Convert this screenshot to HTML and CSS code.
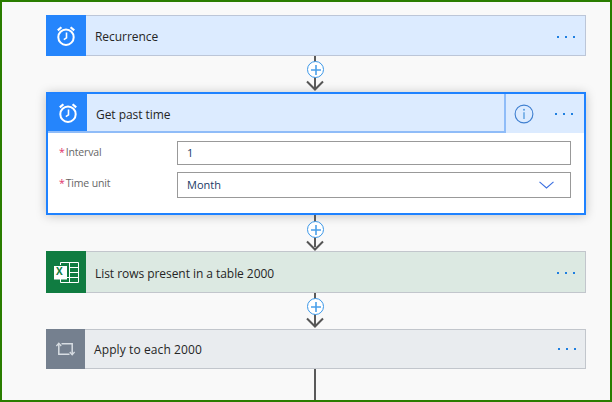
FILE: index.html
```html
<!DOCTYPE html>
<html lang="en">
<head>
<meta charset="utf-8">
<title>Flow</title>
<link rel="stylesheet" href="styles.css">
</head>
<body>
<div class="frame">
  <div class="flow">
    <div class="card card-blue">
      <div class="tile tile-blue">
        <svg class="ico" viewBox="0 0 18 20" width="18" height="20"><circle cx="9" cy="11.2" r="7.7" fill="none" stroke="#fff" stroke-width="2"/><path d="M9.5 6.6V11.8L6.8 13.6" fill="none" stroke="#fff" stroke-width="1.6"/><path d="M.8 4.4 4.4 1.2M17.2 4.4 13.6 1.2" stroke="#fff" stroke-width="2.2" fill="none"/></svg>
      </div>
      <div class="title">Recurrence</div>
      <div class="dots"><i></i><i></i><i></i></div>
    </div>

    <div class="link">
      <span class="line"></span>
      <span class="plus"><svg viewBox="0 0 10 10" width="10" height="10"><path d="M0 5H10M5 0V10" stroke="#4aa0ea" stroke-width="1.6"/></svg></span>
      <svg class="arrow" viewBox="0 0 18 11" width="18" height="11"><path d="M1 1.5 9 9.5 17 1.5" fill="none" stroke="#555" stroke-width="2"/></svg>
    </div>

    <div class="card-open">
      <div class="open-head">
        <div class="head-main">
          <div class="tile tile-blue tile-open">
            <svg class="ico" viewBox="0 0 18 20" width="18" height="20"><circle cx="9" cy="11.2" r="7.7" fill="none" stroke="#fff" stroke-width="2"/><path d="M9.5 6.6V11.8L6.8 13.6" fill="none" stroke="#fff" stroke-width="1.6"/><path d="M.8 4.4 4.4 1.2M17.2 4.4 13.6 1.2" stroke="#fff" stroke-width="2.2" fill="none"/></svg>
          </div>
          <div class="title title-open">Get past time</div>
        </div>
        <div class="head-side">
          <svg class="info" viewBox="0 0 20 20" width="20" height="20"><circle cx="10" cy="10" r="8.9" fill="none" stroke="#3f7fd0" stroke-width="1.1"/><circle cx="10" cy="5.8" r="1" fill="#5a9fe0"/><path d="M10 8.2V15" stroke="#5a9fe0" stroke-width="1.4"/></svg>
          <div class="dots dots-open"><i></i><i></i><i></i></div>
        </div>
      </div>
      <div class="fields">
        <div class="field">
          <label class="label label-first"><span class="req">*</span>Interval</label>
          <div class="input input-short">1</div>
        </div>
        <div class="field">
          <label class="label"><span class="req">*</span>Time unit</label>
          <div class="input input-select">Month
            <svg class="chev" viewBox="0 0 15 8" width="15" height="8"><path d="M.5 .8 7.5 7 14.5 .8" fill="none" stroke="#3b6fe0" stroke-width="1.1"/></svg>
          </div>
        </div>
      </div>
    </div>

    <div class="link link-after-open">
      <span class="line"></span>
      <span class="plus"><svg viewBox="0 0 10 10" width="10" height="10"><path d="M0 5H10M5 0V10" stroke="#4aa0ea" stroke-width="1.6"/></svg></span>
      <svg class="arrow" viewBox="0 0 18 11" width="18" height="11"><path d="M1 1.5 9 9.5 17 1.5" fill="none" stroke="#555" stroke-width="2"/></svg>
    </div>

    <div class="card card-green">
      <div class="tile tile-green">
        <svg class="xl" viewBox="0 0 25 21" width="25" height="21"><path d="M6.5 3V.5H24.5V20.5H6.5V17" fill="none" stroke="#fff" stroke-width="1"/><path d="M15.5 .5V20.5M15.5 5.5H24.5M15.5 10.5H24.5M15.5 15.5H24.5M6.5 15.5H15.5" stroke="#fff" stroke-width="1" fill="none"/><rect x="0" y="4" width="13" height="13.5" fill="#fff"/></svg>
        <span class="xl-x">X</span>
      </div>
      <div class="title">List rows present in a table 2000</div>
      <div class="dots"><i></i><i></i><i></i></div>
    </div>

    <div class="link">
      <span class="line"></span>
      <span class="plus"><svg viewBox="0 0 10 10" width="10" height="10"><path d="M0 5H10M5 0V10" stroke="#4aa0ea" stroke-width="1.6"/></svg></span>
      <svg class="arrow" viewBox="0 0 18 11" width="18" height="11"><path d="M1 1.5 9 9.5 17 1.5" fill="none" stroke="#555" stroke-width="2"/></svg>
    </div>

    <div class="card card-grey">
      <div class="tile tile-grey">
        <svg viewBox="0 0 19 14" width="19" height="14"><path d="M2.8 2V12.2H13.5" fill="none" stroke="#d8dde3" stroke-width="1.5"/><path d="M5.5 1.8H16.2V12.5" fill="none" stroke="#d8dde3" stroke-width="1.5"/><path d="M.4 4 2.8 1.2 5.2 4M13.8 10 16.2 12.8 18.6 10" fill="none" stroke="#d8dde3" stroke-width="1.3"/></svg>
      </div>
      <div class="title title-grey">Apply to each 2000</div>
      <div class="dots dots-grey"><i></i><i></i><i></i></div>
    </div>

    <div class="tail"></div>
  </div>
</div>
</body>
</html>
```

FILE: styles.css
```css
* { box-sizing: border-box; }
html, body { margin: 0; padding: 0; }
body { width: 612px; height: 402px; overflow: hidden; font-family: "Open Sans", "Noto Sans", sans-serif; color: #1a1a1a; }

.frame { width: 612px; height: 402px; border: 2px solid #2a7d00; background: #f9f9f9; overflow: hidden; padding: 13px 0 0 44px; }
.flow { width: 540px; display: flex; flex-direction: column; }

.card { display: flex; align-items: center; border: 1px solid #c2c6cc; border-left: 0; }
.card-blue { height: 41px; background: #dcebff; border-color: #bcc6d8; }
.card-green { height: 42px; background: #dce9e2; }
.card-grey { height: 40px; background: #e9ecef; }

.tile { display: flex; align-items: center; justify-content: center; flex: none; width: 40px; align-self: stretch; margin: -1px 0; position: relative; }
.tile-blue { background: #2585fc; }
.tile-green { background: #107c41; }
.tile-grey { background: #75808f; width: 39px; }
.tile-open { margin: 0; width: 39px; }

.title { font-size: 12px; letter-spacing: -.05px; color: #252525; margin-left: 9px; padding-top: 2px; flex: 1; }
.title-open { padding-top: 3px; }
.title-grey { padding-top: 0; letter-spacing: .1px; }

.dots { display: flex; gap: 6px; margin-right: 10px; padding-top: 2px; }
.dots i { width: 2px; height: 2px; background: #1f7fe0; display: block; }
.dots-open { margin: 0 0 0 21px; padding-top: 0; }
.dots-grey { margin-right: 9px; padding-top: 0; }

.link { height: 36px; position: relative; }
.line { position: absolute; left: 268px; top: 0; width: 2px; height: 32px; background: #5a5a5a; }
.plus { position: absolute; left: 261px; top: 5px; width: 17px; height: 17px; border-radius: 50%; border: 1px solid #3a97e8; background: #fff; display: flex; align-items: center; justify-content: center; }
.arrow { position: absolute; left: 260px; top: 24px; }
.link-after-open .plus { top: 6px; }
.link-after-open .arrow { top: 25px; }

.card-open { height: 123px; border: 2px solid #1f82ff; background: #fff; box-shadow: 0 1px 10px rgba(0,0,0,.22); }
.open-head { display: flex; height: 39px; background: #dcebff; }
.head-main { flex: 1; display: flex; align-items: center; border: solid #8fbcf8; border-width: 0 2px 2px 0; }
.head-side { width: 78px; flex: none; display: flex; align-items: center; padding-left: 8px; }
.head-side .info { flex: none; }

.fields { padding: 8px 13px 0 11px; display: flex; flex-direction: column; gap: 7px; }
.field { display: flex; align-items: center; }
.label { width: 118px; flex: none; font-size: 10.5px; letter-spacing: -.15px; color: #666; padding-bottom: 4px; }
.label-first { padding-bottom: 2px; }
.req { color: #e0306a; margin-right: 1px; }
.input { flex: 1; height: 26px; border: 1px solid #999; font-size: 11px; color: #1a3a66; display: flex; align-items: center; justify-content: space-between; padding: 0 16px 0 9px; background: #fff; }
.input-short { height: 24px; padding-bottom: 1px; }
.input-select { padding-bottom: 2px; }
.chev { margin-top: 2px; }

.xl { position: relative; }
.xl-x { position: absolute; left: 10px; top: 13px; font: bold 10px "Open Sans", sans-serif; color: #107c41; line-height: 14px; }

.tail { width: 2px; height: 40px; background: #5a5a5a; margin-left: 268px; }
```
